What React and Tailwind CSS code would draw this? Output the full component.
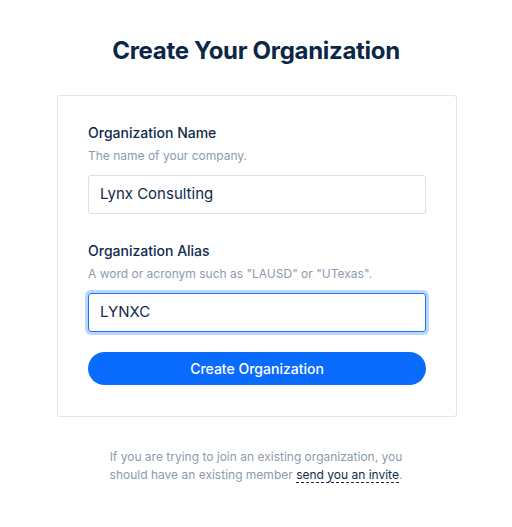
import React from 'react';

const Field = ({ label, hint, value, focused }) => (
    <div>
        <label className="block text-[14px] leading-[18px] font-medium text-[#0f2b4a]">{label}</label>
        <p className="mt-[6px] text-[12px] leading-[16px] text-[#8c9bad]">{hint}</p>
        <div
            className={
                focused
                    ? 'mt-[11px] h-[39px] flex items-center px-[11px] rounded-[3px] border border-[#1a73f5] ring-[3px] ring-[#b9d6ff]'
                    : 'mt-[11px] h-[39px] flex items-center px-[11px] rounded-[3px] border border-[#dcdfe3]'
            }
        >
            <span className="text-[15px] text-[#0f2b4a]">{value}</span>
        </div>
    </div>
);

export default function App() {
    return (
        <div className="min-h-[527px] bg-white flex flex-col items-center font-['Inter',sans-serif]">
            <h1 className="mt-[36px] text-[24px] leading-[30px] font-bold text-[#0b2747] tracking-[-0.3px]">
                Create Your Organization
            </h1>

            <div className="ml-[2px] mt-[29px] w-[400px] border border-[#e1e4e8] rounded-[3px] px-[30px] pt-[28px] pb-[31px]">
                <Field label="Organization Name" hint="The name of your company." value="Lynx Consulting" />
                <div className="h-[28px]" />
                <Field
                    label="Organization Alias"
                    hint={'A word or acronym such as "LAUSD" or "UTexas".'}
                    value="LYNXC"
                    focused
                />
                <button className="mt-[20px] w-full h-[33px] rounded-full bg-[#0a6cff] text-white text-[14px] font-medium">
                    Create Organization
                </button>
            </div>

            <p className="mt-[31px] w-[320px] text-center text-[12px] leading-[18px] text-[#8c9bad]">
                If you are trying to join an existing organization, you should have an existing member{' '}
                <a className="text-[#0f2b4a] border-b border-dashed border-[#0f2b4a]">send you an invite</a>.
            </p>
        </div>
    );
}
